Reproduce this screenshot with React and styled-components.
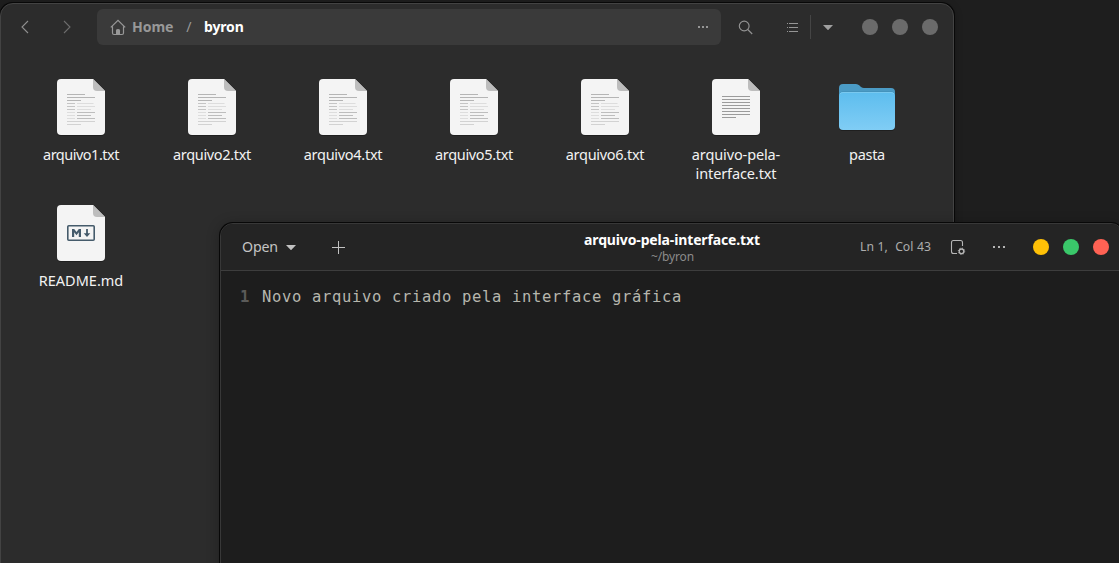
import React from "react";
import styled, { createGlobalStyle } from "styled-components";

const GlobalStyle = createGlobalStyle`
  * { box-sizing: border-box; }
  html, body { margin: 0; height: 100%; overflow: hidden; background: #1e1e1e; }
  body { font-family: "Noto Sans", sans-serif; font-size: 14.667px; color: #f2f2f2; }
  svg { display: block; flex: none; }
`;

const Desktop = styled.main`
  position: relative;
  width: 1119px;
  height: 563px;
  overflow: hidden;
  background: #1e1e1e;
`;

const Window = styled.section`
  position: absolute;
  display: flex;
  flex-direction: column;
  left: ${(p) => p.$x}px;
  top: ${(p) => p.$y}px;
  width: ${(p) => p.$w}px;
  height: 600px;
  border: 1px solid ${(p) => p.$edge};
  border-radius: 13px;
  background: ${(p) => p.$bg};
  box-shadow: 0 0 0 1px #080808, 0 2px ${(p) => p.$blur}px rgba(0, 0, 0, 0.3);
  overflow: hidden;
`;

const FilesHeader = styled.header`
  display: flex;
  align-items: center;
  flex: none;
  height: 46px;
  color: #9a9a9a;
`;

const NavButtons = styled.nav`
  display: flex;
  align-items: center;
  gap: 26px;
  width: 96px;
  padding-left: 16px;
`;

const PathBar = styled.div`
  display: flex;
  align-items: center;
  width: 624px;
  height: 36px;
  padding: 0 12px 0 13px;
  border-radius: 6px;
  background: #3a3a3a;
  font-weight: 700;
`;

const Crumb = styled.span`
  margin-left: ${(p) => p.$gap}px;
  line-height: 20px;
  color: ${(p) => (p.$current ? "#ffffff" : "#989898")};
  font-weight: ${(p) => (p.$light ? 400 : 700)};
  font-size: ${(p) => (p.$current ? 14 : 14.1)}px;
  letter-spacing: ${(p) => (p.$current ? -0.15 : -0.1)}px;
`;

const PushRight = styled.div`
  margin-left: auto;
`;

const HeaderTools = styled.div`
  display: flex;
  align-items: center;
  padding-left: 16px;
`;

const ViewSwitch = styled.div`
  display: flex;
  align-items: center;
  margin-left: 32px;
`;

const Divider = styled.span`
  width: 1px;
  height: 24px;
  margin: 0 9px;
  background: #454545;
`;

const Controls = styled.div`
  display: flex;
  gap: 14px;
  margin-left: ${(p) => p.$gap}px;
`;

const Dot = styled.span`
  width: 16px;
  height: 16px;
  border-radius: 50%;
  background: ${(p) => p.$color};
`;

const FileGrid = styled.div`
  display: grid;
  grid-template-columns: repeat(7, 131px);
  grid-auto-rows: 126px;
  padding: 29px 0 0 14.5px;
`;

const FileItem = styled.div`
  display: flex;
  flex-direction: column;
  align-items: center;
`;

const FileLabel = styled.span`
  width: 110px;
  margin-top: 2px;
  text-align: center;
  font-size: 14.5px;
  line-height: 19px;
  letter-spacing: ${(p) => p.$tracking}px;
  white-space: pre-line;
`;

const EditorHeader = styled.header`
  display: grid;
  grid-template-columns: 1fr auto 1fr;
  align-items: center;
  flex: none;
  height: 47px;
  border-bottom: 1px solid #3d3d3d;
  background: #242424;
  color: #c4c4c4;
`;

const EditorStart = styled.div`
  display: flex;
  align-items: center;
  padding-left: 21px;
`;

const OpenButton = styled.div`
  display: flex;
  align-items: center;
  gap: 5px;
  width: 89px;
  font-size: 14.2px;
  line-height: 20px;
`;

const ButtonText = styled.span`
  width: 36px;
  padding-bottom: 1px;
  letter-spacing: -0.2px;
  white-space: nowrap;
`;

const TitleBlock = styled.div`
  display: flex;
  flex-direction: column;
  align-items: center;
  padding-top: 1px;
`;

const Title = styled.h1`
  margin: 0;
  font-size: 14px;
  line-height: 18px;
  letter-spacing: -0.14px;
  font-weight: 700;
  color: #ffffff;
`;

const Subtitle = styled.span`
  padding-left: 1px;
  font-size: 12px;
  line-height: 16px;
  letter-spacing: -0.15px;
  color: #8b8b8b;
`;

const EditorEnd = styled.div`
  display: flex;
  align-items: center;
  justify-content: flex-end;
  padding-right: 14px;
`;

const Position = styled.span`
  margin-right: 19px;
  padding-bottom: 1px;
  font-size: 12.2px;
  word-spacing: 0.5px;
  white-space: pre;
  color: #adadad;
`;

const MenuSlot = styled.div`
  margin-left: 26px;
`;

const Code = styled.div`
  display: flex;
  padding: 15px 0 0 19px;
  font-family: "DejaVu Sans Mono", monospace;
  font-size: 15.5px;
  letter-spacing: 0.668px;
  line-height: 22px;
  color: #b6b6ad;
`;

const LineNumber = styled.span`
  width: 22px;
  color: #5b5b59;
  font-weight: 700;
`;

const Chevron = ({ forward }) => (
  <svg width="16" height="16" viewBox="0 0 16 16" fill="none" stroke={forward ? "#6c6c6c" : "#8e8e8e"} strokeWidth="1.1">
    <path d={forward ? "M5 2l6 6-6 6" : "M11 2L5 8l6 6"} />
  </svg>
);

const HomeIcon = () => (
  <svg width="16" height="18" viewBox="0 0 16 18" fill="none" stroke="#989898" strokeWidth="1.2">
    <path d="M.8 9.4 8 2.3l7.2 7.1M2.5 8.4V15q0 1.5 1.5 1.5h8q1.5 0 1.5-1.5V8.4" />
    <path d="M6 16v-3.6q0-1.4 2-1.4t2 1.4V16z" fill="#989898" stroke="none" />
  </svg>
);

const MoreIcon = ({ wide, color }) => (
  <svg width={wide ? 14 : 12} height="4" viewBox={wide ? "0 0 14 4" : "0 0 12 4"} fill={color} shapeRendering="crispEdges">
    {[1, wide ? 6 : 5, wide ? 11 : 9].map((x) => (
      <rect key={x} x={x} y="1" width="2" height="2" />
    ))}
  </svg>
);

const SearchIcon = () => (
  <svg width="16" height="16" viewBox="0 0 16 16" fill="none" stroke="#929292" strokeWidth="1.15">
    <circle cx="7.2" cy="7" r="4.9" />
    <path d="M10.7 10.5l4.5 4.5" />
  </svg>
);

const ListIcon = () => (
  <svg width="16" height="16" viewBox="0 0 16 16" fill="#959595" shapeRendering="crispEdges">
    {[4, 8, 12].map((y) => (
      <React.Fragment key={y}>
        <rect x="2" y={y} width="1" height="1" />
        <rect x="4" y={y} width="9" height="1" />
      </React.Fragment>
    ))}
  </svg>
);

const DownIcon = ({ color }) => (
  <svg width="16" height="16" viewBox="0 0 16 16" fill={color}>
    <path d="M3 5.9h10L8.5 10.7q-.5.5-1 0z" />
  </svg>
);

const PlusIcon = () => (
  <svg width="15" height="15" viewBox="0 0 15 15" stroke="#c2c2c2" shapeRendering="crispEdges">
    <path d="M1 7.5h13M7.5 1v13" />
  </svg>
);

const DocumentSettingsIcon = () => (
  <svg width="16" height="16" viewBox="0 0 16 16" fill="none" stroke="#b6b6b6" strokeWidth="1.1">
    <path d="M7 14.5H3.5q-2 0-2-2v-9q0-2 2-2h7q2 0 2 2V7" />
    <circle cx="11.5" cy="12.3" r="2.3" strokeWidth="1.3" />
    <circle cx="11.5" cy="12.3" r="3.2" strokeWidth="1" strokeDasharray="1.1 1.41" />
  </svg>
);

const detailedRows = [
  [[10, 18, "#b5b5b5"]],
  [[10, 28, "#b5b5b5"]],
  [[10, 14, "#b5b5b5"]],
  [[10, 8, "#c5c5c5"], [20, 16.5, "#dddddd"]],
  [[10, 8, "#c5c5c5"], [20, 18, "#dddddd"]],
  [[10, 8, "#c5c5c5"], [20, 14, "#dddddd"]],
  [[10, 8, "#dddddd"], [20, 18, "#bdbdbd"]],
  [[10, 8, "#dddddd"], [20, 14, "#bdbdbd"]],
  [[10, 8, "#dddddd"], [20, 18, "#bdbdbd"]],
  [[10, 28, "#d2d2d2"]],
  [[10, 14, "#d2d2d2"]],
];

const plainRows = [28, 28, 28, 28, 28, 28, 28, 14].map((w) => [[10, w, "#9b9b9b"]]);

const TextRows = ({ rows, top }) =>
  rows.map((row, i) =>
    row.map(([x, w, color]) => <rect key={`${i}-${x}`} x={x} y={top + i * 3} width={w} height="1" fill={color} />)
  );

const MarkdownMark = () => (
  <g fill="#455b6b">
    <rect x="10.8" y="20.8" width="26.4" height="14.4" rx="1" fill="none" stroke="#455b6b" strokeWidth="1.6" />
    <path d="M15 32v-8h2.2l2.3 3.1 2.3-3.1H24v8h-2.2v-4.8l-2.3 3-2.3-3V32z" />
    <path d="M29.1 24h1.8v4.2h2.4L30 32l-3.3-3.8h2.4z" />
  </g>
);

const DocumentIcon = ({ kind }) => (
  <svg width="56" height="64" viewBox="-4 0 56 64">
    <path d="M4 1h32l12 12v40q0 4-4 4H4q-4 0-4-4V5q0-4 4-4z" fill="#171717" opacity=".6" />
    <path d="M4 0h32l12 12v40q0 4-4 4H4q-4 0-4-4V4q0-4 4-4z" fill="#f4f4f4" />
    <path d="M36 0l12 12h-8q-4 0-4-4z" fill="#bdbdbd" />
    {kind === "detailed" && <TextRows rows={detailedRows} top={15} />}
    {kind === "plain" && <TextRows rows={plainRows} top={17} />}
    {kind === "markdown" && <MarkdownMark />}
  </svg>
);

const FolderIcon = () => (
  <svg width="56" height="64" viewBox="0 0 56 64">
    <defs>
      <linearGradient id="folderFront" x2="0" y2="1">
        <stop stopColor="#5dbdee" />
        <stop offset="1" stopColor="#80cdf5" />
      </linearGradient>
    </defs>
    <path d="M0 13h56v35q0 4-4 4H4q-4 0-4-4z" fill="#171717" opacity=".6" />
    <path d="M0 20V9q0-4 4-4h13q2 0 3.5 1.5L22 8q1.5 1 3 1h27q4 0 4 4v9H0z" fill="#4b9bc5" />
    <rect y="12.6" width="56" height="10" rx="4" fill="#3f8bb4" />
    <rect y="13" width="56" height="38" rx="4" fill="url(#folderFront)" />
    <path d="M1 15q1-1.5 3-1.5h48q2 0 3 1.5" fill="none" stroke="#80cbf0" strokeWidth=".8" />
  </svg>
);

const files = [
  { name: "arquivo1.txt", kind: "detailed", tracking: -0.5 },
  { name: "arquivo2.txt", kind: "detailed", tracking: -0.34 },
  { name: "arquivo4.txt", kind: "detailed", tracking: -0.28 },
  { name: "arquivo5.txt", kind: "detailed", tracking: -0.34 },
  { name: "arquivo6.txt", kind: "detailed", tracking: -0.28 },
  { name: "arquivo-pela-\ninterface.txt", kind: "plain", tracking: -0.12 },
  { name: "pasta", kind: "folder", tracking: -0.3 },
  { name: "README.md", kind: "markdown", tracking: 0 },
];

const FileManager = () => (
  <Window $x={0} $y={3} $w={954} $bg="#2c2c2c" $edge="#434343" $blur={8}>
    <FilesHeader>
      <NavButtons>
        <Chevron />
        <Chevron forward />
      </NavButtons>
      <PathBar>
        <HomeIcon />
        <Crumb $gap={6}>Home</Crumb>
        <Crumb $gap={13} $light>/</Crumb>
        <Crumb $gap={12.5} $current>byron</Crumb>
        <PushRight><MoreIcon color="#969696" /></PushRight>
      </PathBar>
      <HeaderTools>
        <SearchIcon />
        <ViewSwitch>
          <ListIcon />
          <Divider />
          <DownIcon color="#a0a0a0" />
        </ViewSwitch>
        <Controls $gap={26}>
          <Dot $color="#6b6b6b" />
          <Dot $color="#6b6b6b" />
          <Dot $color="#6b6b6b" />
        </Controls>
      </HeaderTools>
    </FilesHeader>
    <FileGrid>
      {files.map(({ name, kind, tracking }) => (
        <FileItem key={name}>
          {kind === "folder" ? <FolderIcon /> : <DocumentIcon kind={kind} />}
          <FileLabel $tracking={tracking}>{name}</FileLabel>
        </FileItem>
      ))}
    </FileGrid>
  </Window>
);

const TextEditor = () => (
  <Window $x={220} $y={223} $w={904} $bg="#1d1d1d" $edge="#383838" $blur={14}>
    <EditorHeader>
      <EditorStart>
        <OpenButton>
          <ButtonText>Open</ButtonText>
          <DownIcon color="#c2c2c2" />
        </OpenButton>
        <PlusIcon />
      </EditorStart>
      <TitleBlock>
        <Title>arquivo-pela-interface.txt</Title>
        <Subtitle>~/byron</Subtitle>
      </TitleBlock>
      <EditorEnd>
        <Position>{"Ln 1,  Col 43"}</Position>
        <DocumentSettingsIcon />
        <MenuSlot><MoreIcon wide color="#b4b4b4" /></MenuSlot>
        <Controls $gap={27}>
          <Dot $color="#ffc107" />
          <Dot $color="#3ac86a" />
          <Dot $color="#ff6254" />
        </Controls>
      </EditorEnd>
    </EditorHeader>
    <Code>
      <LineNumber>1</LineNumber>
      <span>Novo arquivo criado pela interface gráfica</span>
    </Code>
  </Window>
);

export default function App() {
  return (
    <>
      <GlobalStyle />
      <Desktop>
        <FileManager />
        <TextEditor />
      </Desktop>
    </>
  );
}
